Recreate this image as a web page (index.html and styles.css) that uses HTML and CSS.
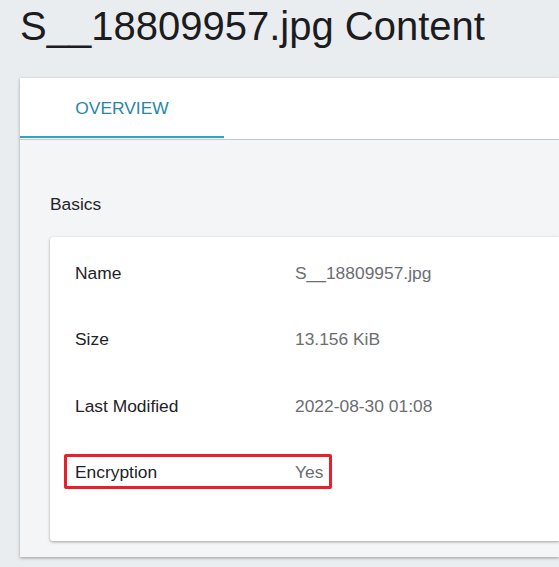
FILE: index.html
```html
<!DOCTYPE html>
<html lang="en">
<head>
<meta charset="utf-8">
<title>S__18809957.jpg Content</title>
<link rel="stylesheet" href="styles.css">
</head>
<body>
<div class="page">
  <h1 class="title">S__18809957.jpg Content</h1>
  <section class="panel">
    <nav class="tabs">
      <div class="tab active">OVERVIEW</div>
    </nav>
    <div class="panel-body">
      <h2 class="section-title">Basics</h2>
      <div class="card">
        <div class="row">
          <div class="label">Name</div>
          <div class="value">S__18809957.jpg</div>
        </div>
        <div class="row">
          <div class="label">Size</div>
          <div class="value">13.156 KiB</div>
        </div>
        <div class="row">
          <div class="label">Last Modified</div>
          <div class="value">2022-08-30 01:08</div>
        </div>
        <div class="row highlighted">
          <div class="label">Encryption</div>
          <div class="value">Yes</div>
          <div class="mark"></div>
        </div>
      </div>
    </div>
  </section>
</div>
</body>
</html>
```
FILE: styles.css
```css
html, body {
  margin: 0;
  padding: 0;
}
body {
  background: #eaedf0;
  font-family: "Liberation Sans", Arial, sans-serif;
  overflow: hidden;
  width: 559px;
  height: 567px;
}
.page {
  padding: 3px 0 0 20px;
}
.title {
  margin: 0;
  font-size: 40px;
  line-height: 46px;
  font-weight: normal;
  color: #1c1c1e;
  white-space: nowrap;
}
.panel {
  margin-top: 29px;
  background: #f4f5f7;
  box-shadow: 0 1px 3px rgba(0, 0, 0, 0.35);
  padding-bottom: 16px;
}
.tabs {
  display: flex;
  background: #ffffff;
  padding-bottom: 1px;
  border-bottom: 1px solid #c6c8ca;
}
.tab {
  width: 204px;
  height: 60px;
  padding-top: 2px;
  box-sizing: border-box;
  display: flex;
  align-items: center;
  justify-content: center;
  font-size: 17.4px;
  line-height: 20px;
  color: #2787a7;
  border-bottom: 2px solid transparent;
}
.tab.active {
  border-bottom-color: #2aa6c2;
}
.panel-body {
  padding: 54px 0 0 30px;
}
.section-title {
  margin: 0 0 23px 0;
  font-size: 17.4px;
  line-height: 20px;
  font-weight: normal;
  color: #1f2329;
}
.card {
  background: #ffffff;
  border-radius: 3px 0 0 3px;
  box-shadow: 0 1px 3px rgba(0, 0, 0, 0.35);
  padding: 3px 0 36px 25px;
}
.row {
  position: relative;
  display: flex;
  align-items: center;
  height: 66.3px;
  font-size: 17.4px;
  line-height: 20px;
}
.label {
  width: 220px;
  color: #1f2329;
}
.value {
  color: #6b6e72;
}
.mark {
  position: absolute;
  left: -11px;
  top: 15px;
  width: 268px;
  height: 35px;
  box-sizing: border-box;
  border: 3px solid #e8202c;
  border-radius: 2px;
}
```
